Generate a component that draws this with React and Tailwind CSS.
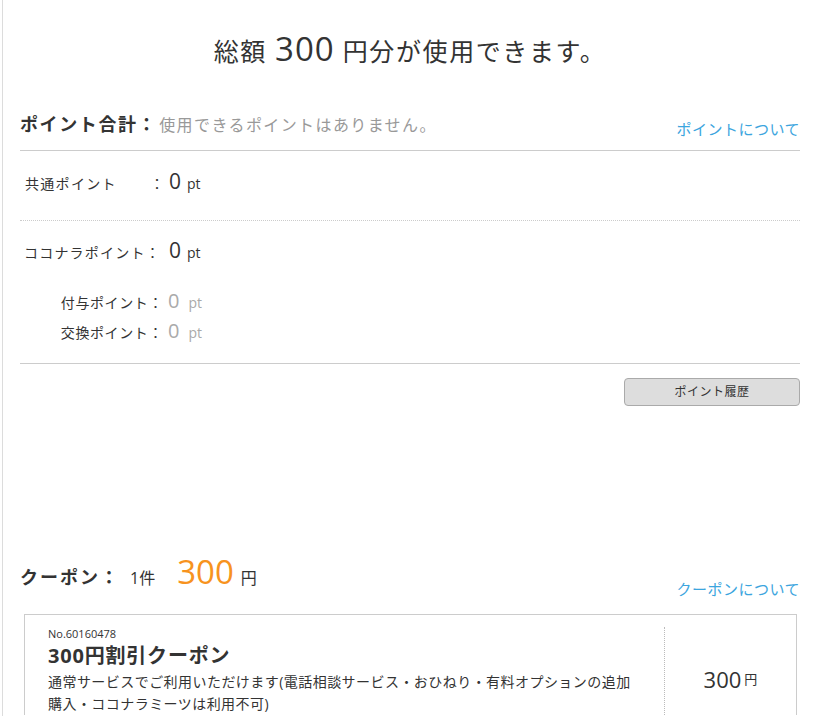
import React from 'react';

const font = { fontFamily: '"Open Sans", "Noto Sans CJK JP", sans-serif' };

export default function App() {
  return (
    <div className="min-h-screen bg-white text-[#333]" style={font}>
      <div className="ml-[2px] min-h-[716px] border-l border-[#dcdcdc] pl-[17px] pr-[16px]">
        {/* Title */}
        <h1 className="pt-[25px] text-center text-[25px] leading-[48px] tracking-[1.6px] text-[#333]">
          総額 <span className="text-[33px] tracking-[1px]">300</span> 円分が使用できます。
        </h1>

        {/* Points */}
        <div className="mt-[36px] flex items-end justify-between border-b border-[#ccc] pb-[12px]">
          <div className="flex items-baseline">
            <span className="text-[18px] font-bold tracking-[1.6px]">ポイント合計：</span>
            <span className="ml-[2px] text-[16px] tracking-[1.4px] text-[#999]">使用できるポイントはありません。</span>
          </div>
          <a className="mb-[-2px] text-[15px] tracking-[0.5px] text-[#3ca5de]">ポイントについて</a>
        </div>

        <div className="border-b border-dotted border-[#ccc] pt-[15px] pb-[22px]">
          <div className="flex items-baseline text-[14px]">
            <span className="w-[130px] pl-[5px] tracking-[1.3px]">共通ポイント</span>
            <span className="w-[14px]">：</span>
            <span className="ml-[5px] text-[21px]">0</span>
            <span className="ml-[6px]">pt</span>
          </div>
        </div>

        <div className="border-b border-[#ccc] pt-[14px] pb-[17px]">
          <div className="flex items-baseline text-[14px]">
            <span className="w-[146px] pl-[4px] tracking-[1.2px] whitespace-nowrap">ココナラポイント：</span>
            <span className="ml-[3px] text-[21px]">0</span>
            <span className="ml-[6px]">pt</span>
          </div>
          <div className="mt-[20px] flex flex-col">
            <div className="flex items-baseline text-[14px]">
              <span className="w-[143px] text-right tracking-[0.6px]">付与ポイント：</span>
              <span className="ml-[5px] text-[20px] text-[#aaa]">0</span>
              <span className="ml-[9px] text-[#aaa]">pt</span>
            </div>
            <div className="flex items-baseline text-[14px]">
              <span className="w-[143px] text-right tracking-[0.6px]">交換ポイント：</span>
              <span className="ml-[5px] text-[20px] text-[#aaa]">0</span>
              <span className="ml-[9px] text-[#aaa]">pt</span>
            </div>
          </div>
        </div>

        <div className="flex justify-end pt-[14px]">
          <button className="h-[28px] w-[176px] rounded-[4px] border border-[#aaa] bg-[#ddd] text-[12px] tracking-[0.5px] text-[#333]">
            ポイント履歴
          </button>
        </div>

        {/* Coupons */}
        <div className="mt-[141px] flex items-end justify-between">
          <div className="flex items-baseline">
            <span className="text-[18px] font-bold tracking-[2px]">クーポン：</span>
            <span className="ml-[10px] text-[16px]">1件</span>
            <span className="ml-[22px] text-[33px] text-[#f7931e]">300</span>
            <span className="ml-[7px] text-[16px]">円</span>
          </div>
          <a className="mb-[-4px] text-[15px] tracking-[0.5px] text-[#3ca5de]">クーポンについて</a>
        </div>

        <div className="mt-[17px] ml-[4px] mr-[3px] flex border border-b-0 border-[#ccc]">
          <div className="flex-1 pl-[23px] pt-[11px] pr-[28px]">
            <div className="text-[11px]">No.60160478</div>
            <div className="text-[20px] font-bold leading-[28px] tracking-[0.8px]">300円割引クーポン</div>
            <p className="mt-[1px] text-[14px] leading-[22px] tracking-[0.45px]">
              通常サービスでご利用いただけます(電話相談サービス・おひねり・有料オプションの追加購入・ココナラミーツは利用不可)
            </p>
          </div>
          <div className="mt-[12px] flex w-[132px] items-start justify-center border-l border-dotted border-[#bbb] pt-[37px]">
            <span className="text-[22px] leading-[30px]">300</span>
            <span className="ml-[3px] mt-[6px] text-[13px]">円</span>
          </div>
        </div>
      </div>
    </div>
  );
}
